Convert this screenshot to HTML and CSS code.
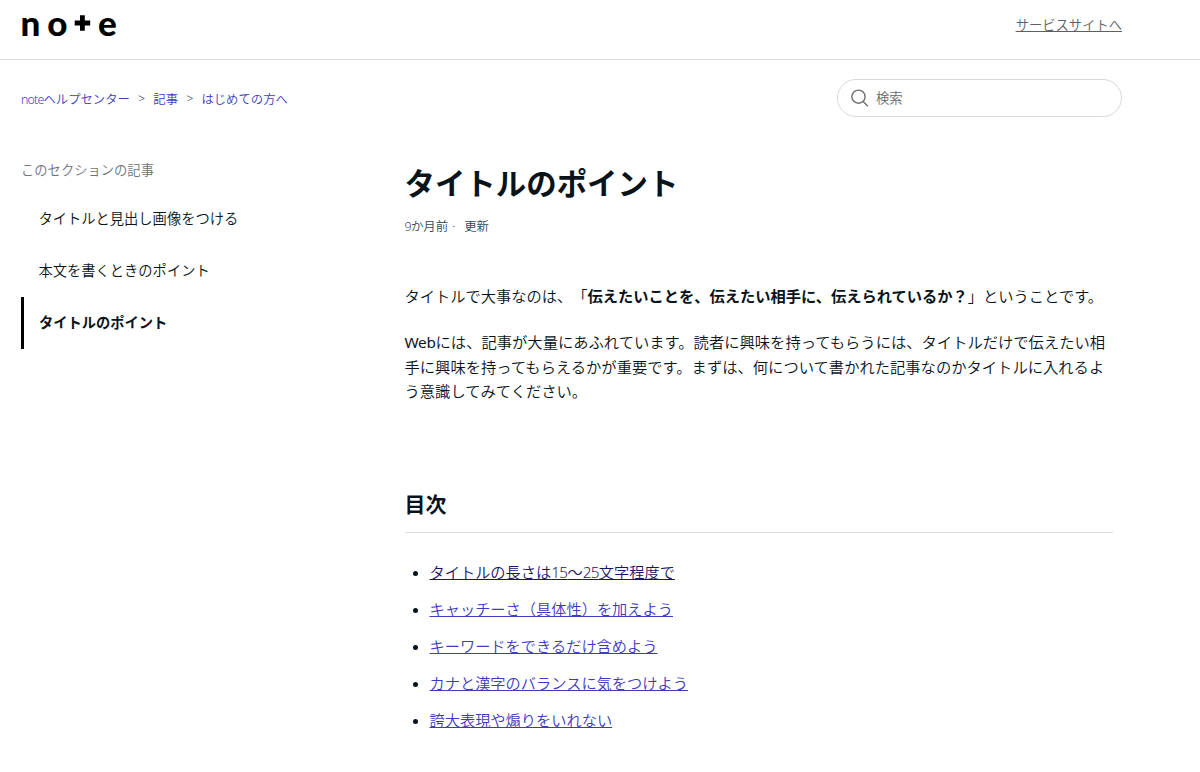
FILE: index.html
```
<!DOCTYPE html>
<html lang="ja">
<head>
<meta charset="utf-8">
<title>タイトルのポイント</title>
<link rel="stylesheet" href="styles.css">
</head>
<body>
<header class="header">
  <a class="logo" aria-label="note">
    <svg width="100" height="30" viewBox="0 0 100 30">
      <text x="9.3" y="25.7">n</text>
      <text x="36.4" y="25.7">o</text>
      <path d="M53.7 13H69.2M61.4 5.2V20.8" stroke="#000" stroke-width="4.8"/>
      <text x="86.5" y="25.7">e</text>
    </svg>
  </a>
  <a class="service">サービスサイトへ</a>
</header>
<div class="subnav">
  <nav class="crumbs"><a><span class="latin">note</span>ヘルプセンター</a><span class="sep">&gt;</span><a>記事</a><span class="sep">&gt;</span><a>はじめての方へ</a></nav>
  <div class="search">
    <svg width="18" height="18" viewBox="0 0 18 18" fill="none" stroke="#6b6f73" stroke-width="1.4"><circle cx="7.5" cy="7.7" r="6.6"/><path d="M12.1 12.5L16.9 17.3"/></svg>
    <span>検索</span>
  </div>
</div>
<div class="content">
  <aside class="sidebar">
    <h3>このセクションの記事</h3>
    <a>タイトルと見出し画像をつける</a>
    <a>本文を書くときのポイント</a>
    <a class="current">タイトルのポイント</a>
  </aside>
  <main class="article">
    <h1>タイトルのポイント</h1>
    <div class="meta"><span><span class="latin">9</span>か月前</span><span class="dot">·</span><span>更新</span></div>
    <p>タイトルで大事なのは、「<strong>伝えたいことを、伝えたい相手に、伝えられているか？</strong>」ということです。</p>
    <p class="body"><span class="word">Web</span>には、記事が大量にあふれています。読者に興味を持ってもらうには、タイトルだけで伝えたい相<br>手に興味を持ってもらえるかが重要です。まずは、何について書かれた記事なのかタイトルに入れるよ<br>う意識してみてください。</p>
    <h2>目次</h2>
    <ul>
      <li><a class="active">タイトルの長さは<span class="latin">15</span>～<span class="latin">25</span>文字程度で</a></li>
      <li><a>キャッチーさ（具体性）を加えよう</a></li>
      <li><a>キーワードをできるだけ含めよう</a></li>
      <li><a>カナと漢字のバランスに気をつけよう</a></li>
      <li><a>誇大表現や煽りをいれない</a></li>
    </ul>
  </main>
</div>
</body>
</html>
```
FILE: styles.css
```
* { box-sizing: border-box; }
body {
  margin: 0;
  height: 772px;
  overflow: hidden;
  background: #fff;
  color: #08131a;
  font-family: "Noto Sans", "Noto Sans CJK JP", sans-serif;
  font-weight: 350;
  font-size: 15.22px;
  white-space: nowrap;
  text-spacing-trim: space-all;
}
.latin { letter-spacing: -0.6px; }
.word { font-weight: 400; letter-spacing: -0.3px; }
.header {
  display: flex;
  justify-content: space-between;
  height: 60px;
  padding: 10px 78px 0 21px;
  border-bottom: 1px solid #ddd;
}
.logo svg { display: block; overflow: visible; }
.logo text { font: 900 35px Lato, sans-serif; fill: #000; text-anchor: middle; }
.service {
  font-size: 13.3px;
  line-height: 31px;
  color: #5c6064;
  text-decoration: underline;
}
.subnav {
  display: flex;
  justify-content: space-between;
  align-items: center;
  padding: 19px 78px 0 21px;
}
.crumbs {
  display: flex;
  gap: 8.2px;
  padding-top: 2px;
  font-size: 12.35px;
  color: #3f3ac0;
}
.crumbs .sep { color: #33475b; }
.crumbs .latin { letter-spacing: -0.8px; }
.search {
  display: flex;
  align-items: center;
  gap: 7px;
  width: 285px;
  height: 38px;
  padding-left: 13px;
  border: 1px solid #d8d9da;
  border-radius: 19px;
  font-size: 13.3px;
  line-height: 18px;
  color: #64686c;
}
.content { display: flex; padding-left: 21px; }
.sidebar { width: 383.5px; padding-top: 41px; }
.sidebar h3 {
  margin: 0 0 11px;
  font-size: 13.3px;
  font-weight: 350;
  line-height: 24px;
  color: #707274;
}
.sidebar a {
  display: block;
  height: 51.9px;
  padding-left: 17.5px;
  font-size: 14.27px;
  line-height: 51.9px;
}
.sidebar .current { border-left: 3px solid #000; padding-left: 15px; font-weight: 700; }
.article { width: 708px; padding-top: 46px; }
h1 { margin: 0; font-size: 30.45px; font-weight: 700; line-height: 41px; }
.meta {
  display: flex;
  margin: 13px 0 47px;
  font-size: 12.4px;
  line-height: 20px;
  color: #2f4858;
}
.meta .dot { width: 16px; padding-left: 4px; }
p { margin: 0 0 22px; font-size: 15.26px; line-height: 24.35px; }
.body { font-size: 15.3px; }
strong { font-weight: 700; }
h2 {
  margin: 84.5px 0 27px;
  padding-bottom: 12px;
  border-bottom: 1px solid #ddd;
  font-size: 20.9px;
  font-weight: 700;
  line-height: 32px;
}
ul { margin: 0; padding-left: 25px; }
li { margin-bottom: 12.65px; line-height: 24.35px; }
li a { color: #3f3ac0; text-decoration: underline; }
li .active { color: #1b1464; }
```
